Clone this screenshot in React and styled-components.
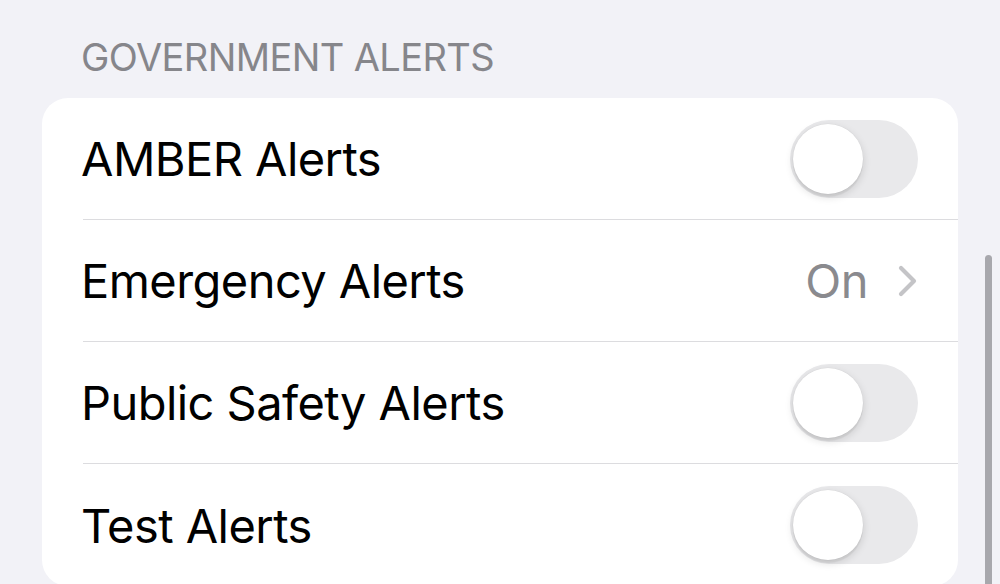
import React from "react";
import styled, { createGlobalStyle } from "styled-components";

const Global = createGlobalStyle`
  html, body { margin: 0; padding: 0; background: #f2f2f7; }
  body { font-family: Inter, "Noto Sans", "Liberation Sans", sans-serif; overflow: hidden; }
`;

const Page = styled.div`
  position: relative;
  width: 1000px;
  height: 584px;
  overflow: hidden;
  background: #f2f2f7;
  padding: 0 42px;
  box-sizing: border-box;
`;

const Header = styled.div`
  padding: 34px 0 0 39px;
  height: 98px;
  box-sizing: border-box;
  font-size: 38px;
  line-height: 46px;
  color: #86868b;
  letter-spacing: -0.6px;
`;

const Card = styled.div`
  background: #fff;
  border-radius: 26px;
  overflow: hidden;
`;

const Row = styled.div`
  display: flex;
  align-items: center;
  height: 122px;
  padding-left: 39px;
  box-sizing: border-box;
`;

const RowInner = styled.div`
  flex: 1;
  height: 100%;
  display: flex;
  align-items: center;
  justify-content: space-between;
  padding-right: 40px;
  box-sizing: border-box;
  border-bottom: ${(p) => (p.$last ? "none" : "1.5px solid #dcdcdf")};
  margin-left: 2px;
`;

const Label = styled.span`
  font-size: 47px;
  color: #000;
  letter-spacing: -0.55px;
  margin-left: -2px;
`;

const Track = styled.div`
  position: relative;
  width: 128px;
  height: 78px;
  border-radius: 39px;
  background: #e9e9eb;
`;

const Knob = styled.div`
  position: absolute;
  top: 4px;
  left: 3px;
  width: 70px;
  height: 70px;
  border-radius: 50%;
  background: #fff;
  box-shadow: 0 3px 8px rgba(0, 0, 0, 0.14), 0 3px 1px rgba(0, 0, 0, 0.05), 0 0 0 0.5px rgba(0,0,0,0.04);
`;

const Detail = styled.div`
  display: flex;
  align-items: center;
  gap: 30px;
  font-size: 47px;
  color: #8a8a8e;
  letter-spacing: -0.5px;
`;

const Scrollbar = styled.div`
  position: absolute;
  right: 8px;
  top: 255px;
  width: 7px;
  height: 360px;
  border-radius: 4px;
  background: #a8a8ad;
`;

const Toggle = () => (
  <Track>
    <Knob />
  </Track>
);

const Chevron = () => (
  <svg width="20" height="32" viewBox="0 0 20 32">
    <polyline
      points="3,3 16,16 3,29"
      fill="none"
      stroke="#c4c4c7"
      strokeWidth="4.2"
      strokeLinecap="round"
      strokeLinejoin="round"
    />
  </svg>
);

const rows = [
  { label: "AMBER Alerts", type: "toggle" },
  { label: "Emergency Alerts", type: "detail", value: "On" },
  { label: "Public Safety Alerts", type: "toggle" },
  { label: "Test Alerts", type: "toggle" },
];

export default function App() {
  return (
    <Page>
      <Global />
      <Header>GOVERNMENT ALERTS</Header>
      <Card>
        {rows.map((r, i) => (
          <Row key={r.label}>
            <RowInner $last={i === rows.length - 1}>
              <Label>{r.label}</Label>
              {r.type === "toggle" ? (
                <Toggle />
              ) : (
                <Detail>
                  <span>{r.value}</span>
                  <Chevron />
                </Detail>
              )}
            </RowInner>
          </Row>
        ))}
      </Card>
      <Scrollbar />
    </Page>
  );
}
